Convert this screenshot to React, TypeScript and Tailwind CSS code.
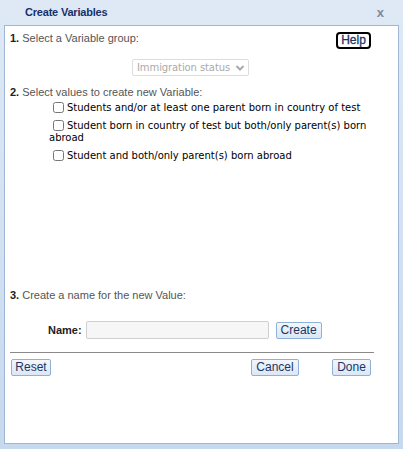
const options = [
  "Students and/or at least one parent born in country of test",
  "Student born in country of test but both/only parent(s) born abroad",
  "Student and both/only parent(s) born abroad",
];

const btn =
  "rounded-[2px] border border-[#8fb0d8] bg-gradient-to-b from-[#f3f7fc] to-[#dbe7f6] h-[17px] leading-[15px] text-[12px] text-[#1c3564] text-center";

const verdana = { fontFamily: "'DejaVu Sans', Verdana, sans-serif" };

export default function App() {
  return (
    <div
      className="w-[403px] h-[449px] bg-gradient-to-b from-[#dfe9f6] to-[#c7d9ef] px-[4px] pb-[5px] flex flex-col"
      style={{ fontFamily: "'Liberation Sans', Arial, sans-serif" }}
    >
      {/* title bar */}
      <div className="h-[25px] flex items-center justify-between pl-[21px] pr-[15px] shrink-0">
        <span className="text-[11px] font-bold tracking-[-0.2px] text-[#15316b]">Create Variables</span>
        <span className="text-[13px] font-bold text-[#7f8a99] leading-none">x</span>
      </div>

      {/* body */}
      <div className="flex-1 bg-white border border-[#9fb6d5] pt-[4px] pl-[5px] pr-[27px] flex flex-col">
        <div className="flex items-start justify-between h-[21px]">
          <p className="text-[11px] leading-[16px] text-[#555]">
            <b className="text-[#222]">1.</b> Select a Variable group:
          </p>
          <button className="mt-[2px] rounded-[4px] border-2 border-black w-[35px] h-[17px] leading-[13px] text-[12px] text-[#1c3564] [-webkit-text-stroke:0.3px_#1c3564]">
            Help
          </button>
        </div>

        <div className="flex justify-center mt-[8px]">
          <div
            className="w-[117px] h-[17px] border border-[#ddd] rounded-[2px] flex items-center justify-between pl-[4px] pr-[3px] text-[10px] tracking-[-0.1px] text-[#aaa] whitespace-nowrap"
            style={verdana}
          >
            <span>Immigration status</span>
            <svg width="10" height="8" viewBox="0 0 10 8">
              <path d="M1.5 2l3.5 3.5 3.5-3.5" fill="none" stroke="#aaa" strokeWidth="2" />
            </svg>
          </div>
        </div>

        <p className="mt-[8px] text-[11px] leading-[16px] text-[#555]">
          <b className="text-[#222]">2.</b> Select values to create new Variable:
        </p>

        <div
          className="pl-[39px] mt-[2px] flex flex-col gap-[6px] text-[10px] text-black leading-[12px]"
          style={verdana}
        >
          {options.map((o) => (
            <label key={o} className="block">
              <span className="inline-block w-[4px]" />
              <input type="checkbox" className="align-[-2px] mr-[3px] w-[11px] h-[11px]" />
              {o}
            </label>
          ))}
        </div>

        <p className="mt-[125px] text-[11px] leading-[16px] text-[#555]">
          <b className="text-[#222]">3.</b> Create a name for the new Value:
        </p>

        <div className="mt-[18px] flex items-center pl-[38px]">
          <span className="text-[11px] font-bold text-[#222] mr-[4px]">Name:</span>
          <input className="w-[183px] h-[18px] bg-[#f6f6f6] border border-[#cfcfcf] rounded-[2px]" />
          <button className={`${btn} w-[46px] ml-[7px]`}>Create</button>
        </div>

        <div className="mt-[13px] h-px bg-[#8a8a8a] mr-[-3px]" />

        <div className="mt-[6px] flex items-center">
          <button className={`${btn} w-[40px] ml-[1px]`}>Reset</button>
          <div className="flex-1" />
          <button className={`${btn} w-[48px]`}>Cancel</button>
          <button className={`${btn} w-[39px] ml-[33px]`}>Done</button>
        </div>

        <div className="flex-1 min-h-0" />
      </div>
    </div>
  );
}
